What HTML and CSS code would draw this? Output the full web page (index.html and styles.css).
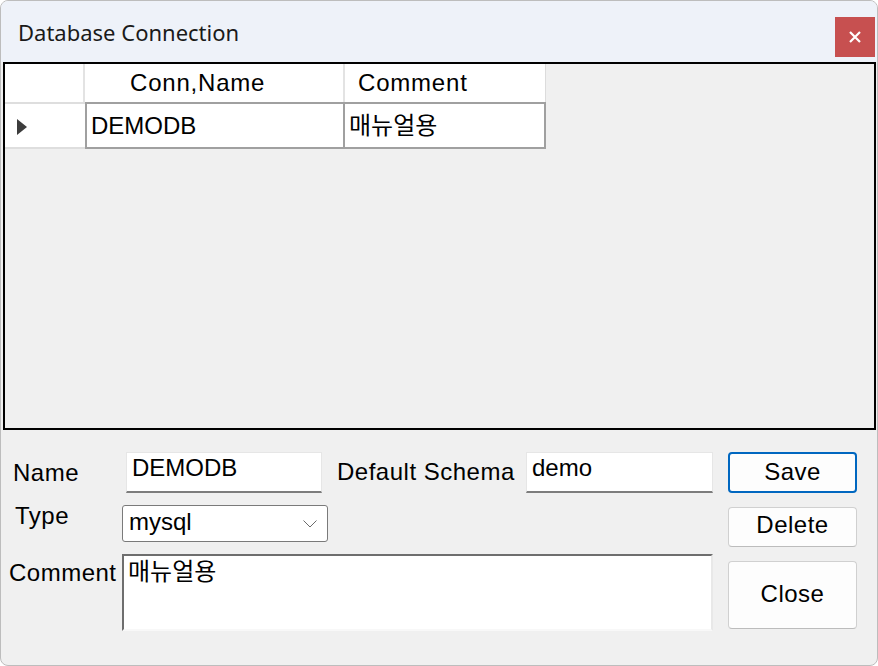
FILE: index.html
```html
<!DOCTYPE html>
<html lang="ko">
<head>
<meta charset="utf-8">
<title>Database Connection</title>
<link rel="stylesheet" href="styles.css">
</head>
<body>
<div class="window">
  <div class="titlebar">
    <span class="title">Database Connection</span>
    <button class="close-btn" type="button" aria-label="Close">
      <svg width="12" height="12" viewBox="0 0 12 12"><path d="M1 1 L11 11 M11 1 L1 11" stroke="#fff" stroke-width="2.2" fill="none"/></svg>
    </button>
  </div>
  <div class="grid-view">
    <div class="gv-row gv-header">
      <div class="gv-cell rh"></div>
      <div class="gv-cell c1 h1">Conn,Name</div>
      <div class="gv-cell c2 h2">Comment</div>
    </div>
    <div class="gv-row gv-data">
      <div class="gv-cell rh"><span class="row-arrow"></span></div>
      <div class="gv-cell c1">DEMODB</div>
      <div class="gv-cell c2">매뉴얼용</div>
    </div>
  </div>
  <div class="form">
    <div class="lbl lbl-name">Name</div>
    <div class="textbox tb-name">DEMODB</div>
    <div class="lbl lbl-schema">Default Schema</div>
    <div class="textbox tb-schema">demo</div>
    <button class="btn btn-save" type="button">Save</button>

    <div class="lbl lbl-type">Type</div>
    <div class="combo">
      <span>mysql</span>
      <svg class="chev" width="14" height="8" viewBox="0 0 14 8"><path d="M0.5 0.5 L7 7 L13.5 0.5" stroke="#6a6a6a" stroke-width="1" fill="none"/></svg>
    </div>
    <button class="btn btn-delete" type="button">Delete</button>

    <div class="lbl lbl-comment">Comment</div>
    <div class="memo">매뉴얼용</div>
    <button class="btn btn-close" type="button">Close</button>
  </div>
</div>
</body>
</html>
```
FILE: styles.css
```css
* { box-sizing: border-box; }
html, body { margin: 0; padding: 0; background: #ffffff; }
body {
  font-family: "Liberation Sans", "Noto Sans CJK KR", sans-serif;
  font-size: 24px;
  color: #000;
}
.window {
  width: 878px;
  height: 666px;
  border: 1px solid #bdbdbd;
  border-radius: 8px;
  background: #f0f0f0;
  overflow: hidden;
  display: flex;
  flex-direction: column;
}
.titlebar {
  height: 61px;
  flex: none;
  background: #eef2f9;
  display: flex;
  align-items: flex-start;
}
.title {
  font-family: "Noto Sans", sans-serif;
  font-size: 22px;
  line-height: 28px;
  padding: 17px 0 0 17px;
  color: #1a1a1a;
}
.close-btn {
  margin: 16px 2px 0 auto;
  width: 40px;
  height: 40px;
  border: none;
  padding: 0;
  background: #c75050;
  display: flex;
  align-items: center;
  justify-content: center;
}
.grid-view {
  flex: none;
  height: 368px;
  margin: 0 1px 0 2px;
  border: 2px solid #000;
  background: #f0f0f0;
}
.gv-row { display: flex; }
.gv-header { height: 38px; }
.gv-data { height: 47px; }
.gv-cell {
  background: #fff;
  white-space: nowrap;
}
.rh { width: 80px; }
.c1 { width: 260px; }
.c2 { width: 201px; }
.gv-header .gv-cell { line-height: 38px; letter-spacing: 0.8px; }
.gv-header .rh, .gv-header .c1 { border-right: 2px solid #e3e3e3; }
.gv-header .c2 { border-right: 1px solid #dcdcdc; }
.h1 { padding-left: 45px; }
.h2 { padding-left: 13px; }
.gv-data .rh {
  border-top: 2px solid #dedede;
  border-bottom: 2px solid #dedede;
  display: flex;
  align-items: center;
  padding-left: 12px;
  padding-top: 3px;
}
.gv-data .c1 {
  border: 2px solid #a0a0a0;
  padding-left: 4px;
  line-height: 43px;
}
.gv-data .c2 {
  border: 2px solid #a0a0a0;
  border-left: none;
  padding-left: 4px;
  line-height: 43px;
}
.row-arrow {
  width: 0;
  height: 0;
  border-top: 8px solid transparent;
  border-bottom: 8px solid transparent;
  border-left: 10px solid #3c3c3c;
}
.form {
  flex: 1;
  display: grid;
  grid-template-columns: 121px 206px 197px 188px 15px 129px;
  grid-template-rows: 41px 54px 84px;
  padding-top: 22px;
}
.lbl { white-space: nowrap; letter-spacing: 0.5px; }
.lbl-name { grid-column: 1; grid-row: 1; padding-left: 12px; line-height: 41px; }
.lbl-schema { grid-column: 3; grid-row: 1; padding-left: 9px; line-height: 39px; }
.lbl-type { grid-column: 1; grid-row: 2; padding-left: 14px; padding-top: 8px; line-height: 30px; }
.lbl-comment { grid-column: 1; grid-row: 3; padding-left: 8px; padding-top: 11px; line-height: 30px; }
.textbox {
  background: #fff;
  border: 1px solid #e6e6e6;
  border-bottom: 2px solid #7d7d7d;
  height: 41px;
  padding-left: 5px;
  line-height: 30px;
  white-space: nowrap;
}
.tb-name { grid-column: 2; grid-row: 1; margin: 0 6px 0 4px; }
.tb-schema { grid-column: 4; grid-row: 1; margin: 0 0 0 1px; }
.combo {
  grid-column: 2;
  grid-row: 2;
  margin-top: 12px;
  height: 37px;
  background: #fff;
  border: 1px solid #7a7a7a;
  border-radius: 3px;
  display: flex;
  align-items: center;
  justify-content: space-between;
  padding: 0 10px 3px 6px;
}
.chev { margin-top: 4px; }
.memo {
  grid-column: 2 / 5;
  grid-row: 3;
  margin-top: 7px;
  height: 77px;
  background: #fff;
  border-top: 2px solid #6e6e6e;
  border-left: 2px solid #6e6e6e;
  border-right: 2px solid #e8e8e8;
  border-bottom: 2px solid #f8f8f8;
  padding-left: 4px;
  padding-top: 2px;
  line-height: 28px;
}
.btn {
  grid-column: 6;
  font-family: "Liberation Sans", sans-serif;
  font-size: 24px;
  color: #000;
  background: #fdfdfd;
  border: 1px solid #d0d0d0;
  border-bottom-color: #bcbcbc;
  border-radius: 4px;
  padding: 0 0 2px;
  letter-spacing: 0.5px;
}
.btn-save {
  grid-row: 1;
  height: 41px;
  border: 2px solid #0067c0;
}
.btn-delete { grid-row: 2; margin-top: 14px; height: 40px; padding-bottom: 4px; }
.btn-close { grid-row: 3; margin-top: 14px; height: 68px; }
```
